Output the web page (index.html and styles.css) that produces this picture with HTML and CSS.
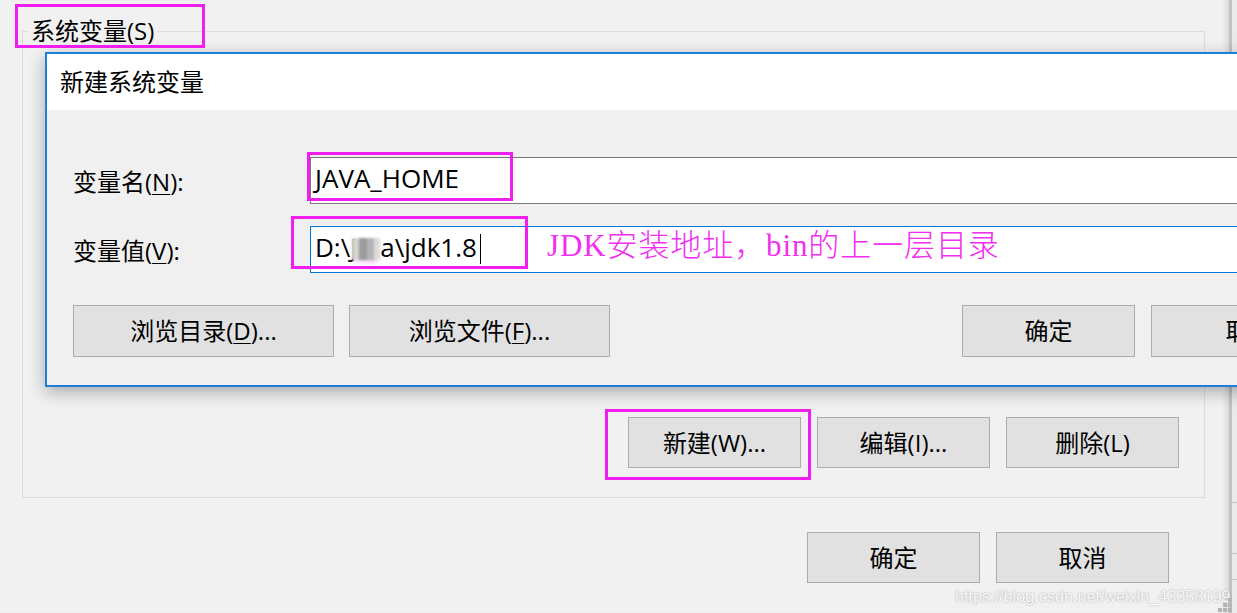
FILE: index.html
```html
<!DOCTYPE html>
<html lang="zh-CN">
<head>
    <meta charset="UTF-8">
    <title>新建系统变量</title>
    <link rel="stylesheet" href="styles.css">
</head>
<body>

<div class="screen">
    <div class="window">
        <fieldset class="group">
            <legend class="group-title">系统变量(S)</legend>
            <div class="group-actions">
                <button class="btn">新建(W)...</button>
                <button class="btn">编辑(I)...</button>
                <button class="btn">删除(L)</button>
            </div>
        </fieldset>
        <div class="window-actions">
            <button class="btn">确定</button>
            <button class="btn">取消</button>
        </div>
    </div>
    <div class="edge">
        <div class="edge-line"></div>
        <div class="edge-line"></div>
        <div class="edge-line"></div>
    </div>

    <div class="dialog">
        <div class="dialog-title">新建系统变量</div>
        <div class="dialog-body">
            <div class="field-row">
                <label class="field-label">变量名(<u>N</u>):</label>
                <div class="field-input">JAVA_HOME</div>
            </div>
            <div class="field-row">
                <label class="field-label">变量值(<u>V</u>):</label>
                <div class="field-input focused">D:\J<span class="mosaic"></span>a\jdk1.8<span class="caret"></span></div>
            </div>
            <div class="dialog-actions">
                <button class="btn wide">浏览目录(<u>D</u>)...</button>
                <button class="btn wide">浏览文件(<u>F</u>)...</button>
                <button class="btn push">确定</button>
                <button class="btn">取</button>
            </div>
        </div>
    </div>

    <!-- annotations drawn over the screenshot -->
    <div class="mark mark-group"></div>
    <div class="mark mark-name"></div>
    <div class="mark mark-value"></div>
    <div class="mark mark-new"></div>
    <div class="note">JDK安装地址，bin的上一层目录</div>

    <div class="watermark">https://blog.csdn.net/weixin_43358199</div>
    <div class="grip">
        <span></span>
        <span></span><span></span>
        <span></span><span></span><span></span>
    </div>
</div>

</body>
</html>
```

FILE: styles.css
```css
body {
    margin: 0;
    padding: 0;
    font-family: "Open Sans", "Noto Sans CJK SC", sans-serif;
    font-size: 24px;
    color: #000;
    background: #f0f0f0;
}
.screen {
    position: relative;
    display: flex;
    width: 1237px;
    height: 613px;
    overflow: hidden;
    background: #f1f1f1;
}
.window {
    width: 1229px;
    flex: none;
    box-shadow: inset -6px 0 6px -4px rgba(0, 0, 0, 0.12);
}
.edge {
    flex: 1;
    border-left: 3px solid #c2c2c2;
    background: #eaeaea;
    padding-top: 502px;
}
.edge-line {
    height: 1px;
    background: #c4c4c4;
    margin-bottom: 50px;
}
.edge-line:nth-child(2) {
    margin-bottom: 25px;
}

/* group box */
.group {
    box-sizing: border-box;
    width: 1183px;
    height: 482px;
    margin: 16px 0 0 22px;
    padding: 0 25px 0 0;
    border: 1px solid #dcdcdc;
}
.group-title {
    margin-left: 5px;
    padding: 0 3px;
    line-height: 30px;
}
.group-actions {
    display: flex;
    justify-content: flex-end;
    gap: 16px;
    margin-top: 371px;
}
.window-actions {
    display: flex;
    justify-content: flex-end;
    gap: 16px;
    margin-top: 34px;
    padding-right: 60px;
}

/* buttons */
.btn {
    box-sizing: border-box;
    width: 173px;
    height: 51px;
    margin: 0;
    padding: 0;
    font: inherit;
    line-height: 1;
    color: #000;
    background: #e1e1e1;
    border: 1px solid #adadad;
}
.btn.wide {
    width: 261px;
}
.btn.push {
    margin-left: auto;
}
u {
    text-decoration-thickness: 1px;
    text-underline-offset: 3px;
}

/* dialog */
.dialog {
    position: absolute;
    left: 45px;
    top: 52px;
    width: 1302px;
    border: 2px solid #1d7fd7;
    background: #f0f0f0;
    box-shadow: 0 5px 16px rgba(0, 0, 0, 0.3);
    z-index: 1;
}
.dialog-title {
    height: 56px;
    line-height: 56px;
    padding-left: 13px;
    background: #fff;
}
.dialog-body {
    padding: 47px 25px 28px 26px;
}
.field-row {
    display: flex;
    align-items: center;
    margin-bottom: 22px;
}
.field-label {
    width: 237px;
    flex: none;
}
.field-input {
    flex: 1;
    box-sizing: border-box;
    height: 47px;
    display: flex;
    align-items: center;
    padding: 0 0 5px 4px;
    font-size: 26px;
    background: #fff;
    border: 1px solid #7a7a7a;
    border-right: none;
}
.field-input.focused {
    border-color: #0078d7;
}
.mosaic {
    display: inline-block;
    width: 28px;
    height: 22px;
    margin: 4px 0 0 -5px;
    background: linear-gradient(90deg, #d4d4d4 0 25%, #9c9c9c 25% 55%, #b4b4b4 55% 80%, #dcdcdc 80%);
    box-shadow: 0 5px 4px -2px #f4d2f4;
    filter: blur(1px);
}
.caret {
    display: inline-block;
    width: 1px;
    height: 30px;
    margin: 4px 0 0 3px;
    background: #000;
}
.dialog-actions {
    display: flex;
    gap: 16px;
    margin-top: 32px;
}
.dialog-actions .btn {
    height: 52px;
}
.dialog-actions .wide + .wide {
    margin-left: -1px;
}

/* magenta annotations */
.mark {
    position: absolute;
    box-sizing: border-box;
    border: 3px solid #f01ff0;
    z-index: 2;
}
.mark-group { left: 15px; top: 4px; width: 190px; height: 44px; }
.mark-name { left: 307px; top: 152px; width: 206px; height: 49px; }
.mark-value { left: 291px; top: 216px; width: 237px; height: 53px; }
.mark-new { left: 605px; top: 409px; width: 206px; height: 71px; }
.note {
    position: absolute;
    left: 547px;
    top: 229px;
    z-index: 2;
    font-family: "Liberation Serif", "Noto Sans CJK SC", serif;
    font-weight: 300;
    font-size: 31px;
    line-height: 34px;
    letter-spacing: 0.9px;
    color: #f22ef0;
}

.watermark {
    position: absolute;
    left: 955px;
    top: 585px;
    z-index: 2;
    font-family: "Liberation Sans", sans-serif;
    font-size: 16.2px;
    line-height: 22px;
    color: rgba(255, 255, 255, 0.92);
    text-shadow: 0 0 2px rgba(0, 0, 0, 0.35);
}
.grip {
    position: absolute;
    right: 5px;
    bottom: 1px;
    width: 15px;
    display: grid;
    grid-template-columns: repeat(3, 4px);
    gap: 1px;
    direction: rtl;
    z-index: 2;
}
.grip span {
    width: 4px;
    height: 4px;
    background: #b4b4b4;
}
.grip span:nth-child(1) { grid-column: 1; grid-row: 1; }
.grip span:nth-child(2) { grid-column: 1; grid-row: 2; }
.grip span:nth-child(3) { grid-column: 2; grid-row: 2; }
.grip span:nth-child(4) { grid-column: 1; grid-row: 3; }
.grip span:nth-child(5) { grid-column: 2; grid-row: 3; }
.grip span:nth-child(6) { grid-column: 3; grid-row: 3; }
```
